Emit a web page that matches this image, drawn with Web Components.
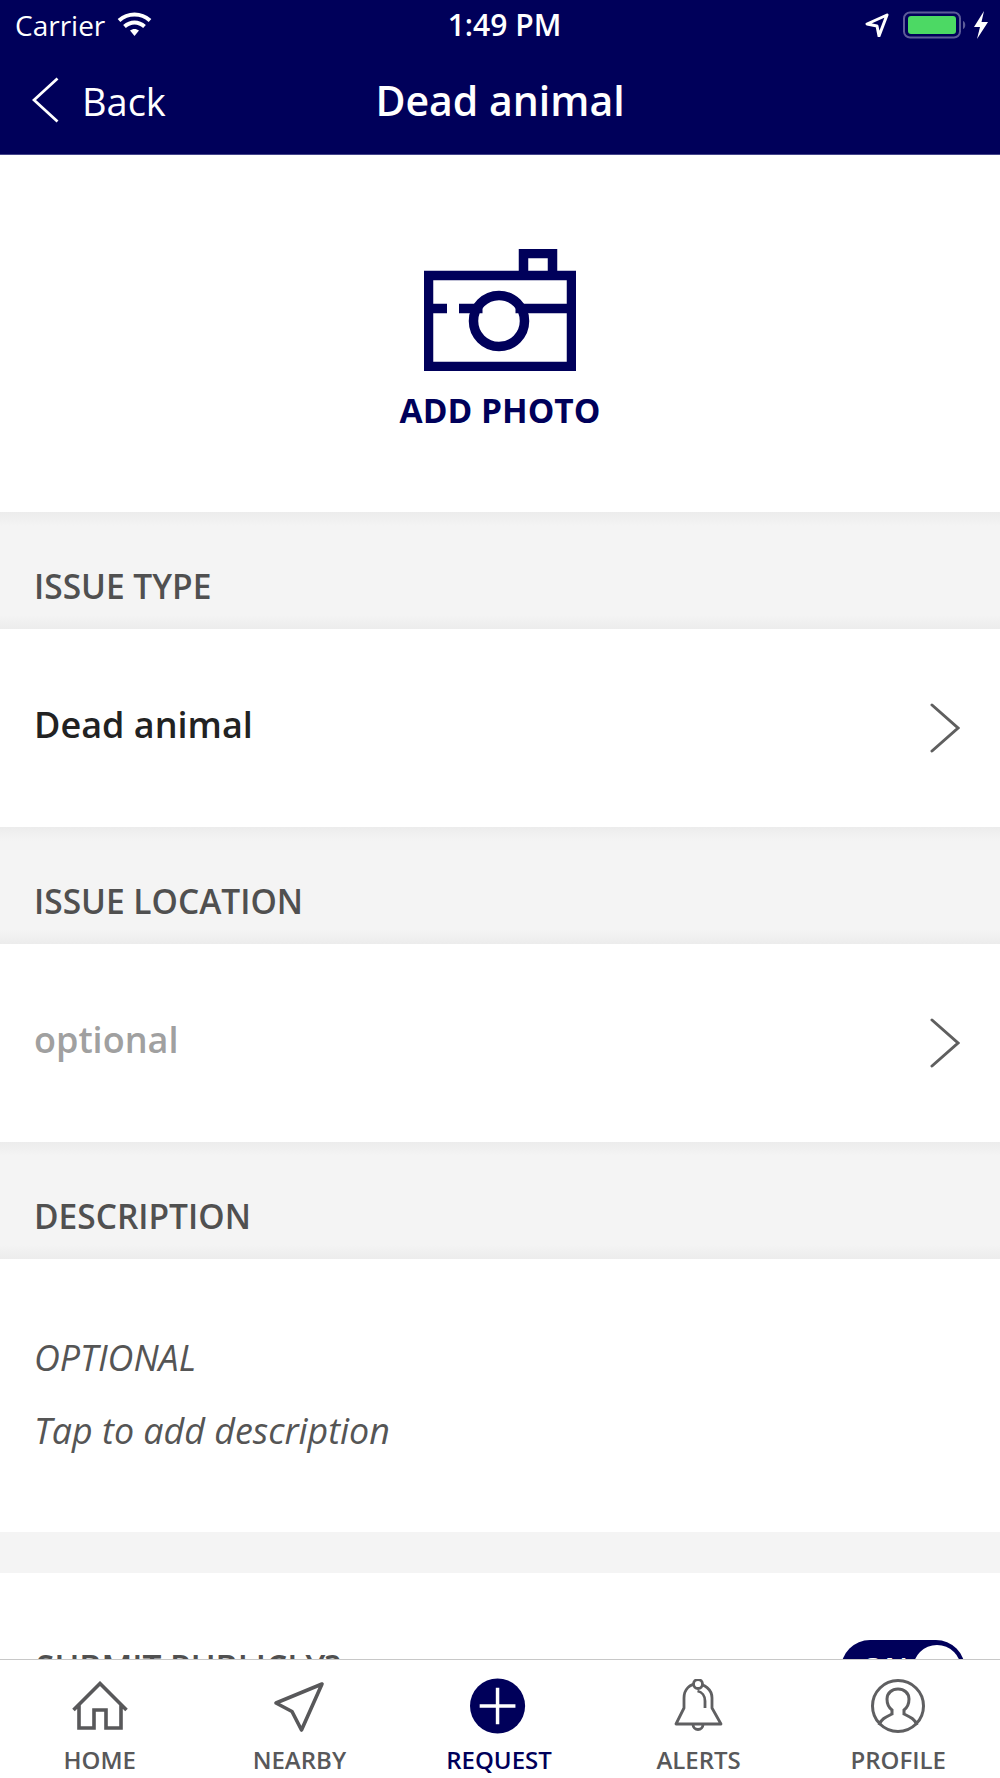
<!DOCTYPE html>
<html>
<head>
<meta charset="utf-8">
<style>
  html, body { margin: 0; padding: 0; background: #fff; }
  body { font-family: "Open Sans", sans-serif; }
</style>
</head>
<body>
<app-screen>
  <status-bar></status-bar>
  <nav-bar title="Dead animal"></nav-bar>
  <photo-picker></photo-picker>
  <section-header>ISSUE TYPE</section-header>
  <form-row>Dead animal</form-row>
  <section-header>ISSUE LOCATION</section-header>
  <form-row placeholder>optional</form-row>
  <section-header>DESCRIPTION</section-header>
  <description-box></description-box>
  <public-toggle></public-toggle>
  <tab-bar slot="tabs">
    <tab-item label="HOME"><svg viewBox="0 0 60 52"><path d="M3.500 29 30 2.500 56.500 29M9 24V47H24V29H36V47H51V24" fill="none" stroke="#58585a" stroke-width="3.600"/></svg></tab-item>
    <tab-item label="NEARBY"><svg viewBox="0 0 60 52"><path d="M53 3 7 22 23 30.500 32.500 49Z" fill="none" stroke="#58585a" stroke-width="3.600" stroke-linejoin="round"/></svg></tab-item>
    <tab-item label="REQUEST" active><svg viewBox="0 0 60 60" style="height:58px;margin-top:-4px"><circle cx="28.500" cy="30" r="28.500" fill="#00005a"/><path d="M28.500 11V49M10 30H47" stroke="#fff" stroke-width="3.600" fill="none"/></svg></tab-item>
    <tab-item label="ALERTS"><svg viewBox="0 0 60 54" style="height:54px;margin-top:-2px"><path d="M7 45 15 29V19C15 10 21 5 28 5S43 10 43 19V29L52 45Z" fill="none" stroke="#5f5f61" stroke-width="2.800" stroke-linejoin="round"/><circle cx="29" cy="5" r="4.500" fill="#fff" stroke="#5f5f61" stroke-width="2.800"/><path d="M24 45.500a5 5 0 0 0 10 0" fill="none" stroke="#5f5f61" stroke-width="2.800"/><path d="M28.500 12C33 13 36 17 36 22V29" fill="none" stroke="#5f5f61" stroke-width="2.800"/></svg></tab-item>
    <tab-item label="PROFILE"><svg viewBox="0 0 60 56" style="height:56px;margin-top:-3px"><circle cx="30" cy="28" r="25.500" fill="none" stroke="#5f5f61" stroke-width="3"/><path d="M11 47C13 41 18 39 24 36V32C20 29 19 25 19 21 19 15 24 11 30 11S41 15 41 21C41 25 40 29 36 32V36C42 39 47 41 49 47" fill="none" stroke="#5f5f61" stroke-width="3"/></svg></tab-item>
  </tab-bar>
</app-screen>

<script>
const el = (name, css, html) => {
  customElements.define(name, class extends HTMLElement {
    constructor() {
      super();
      this.attachShadow({ mode: "open" });
      this.shadowRoot.innerHTML = `<style>${css}</style>${html(this)}`;
    }
  });
};

el("app-screen", `
  :host { display: flex; flex-direction: column; width: 1000px; height: 1778px; overflow: hidden; background: #fff; }
  .scroll { flex: 1; min-height: 0; overflow: hidden; }
`, () => `<div class="scroll"><slot></slot></div><slot name="tabs"></slot>`);

el("status-bar", `
  :host { display: flex; align-items: center; height: 50px; box-sizing: border-box; padding: 0 11px 0 15px; background: #00005a; color: #fff; font-family: "Open Sans", sans-serif; position: relative; }
  .left, .right { display: flex; align-items: center; }
  .carrier { font-size: 28px; margin-right: 12px; }
  .time { position: absolute; left: 9px; right: 0; text-align: center; font-weight: 600; font-size: 30px; top: 8px; line-height: 34px; }
  .right { margin-left: auto; position: relative; }
  svg { display: block; }
`, () => `
  <div class="left">
    <span class="carrier">Carrier</span>
    <svg width="35" height="26" viewBox="0 0 35 26"><path d="M17.500 24 22 18.600C19.500 16.500 15.500 16.500 13 18.600Z" fill="#fff"/><path d="M2 8.500C11 0.500 24 0.500 33 8.500M7.500 14.500C13.500 9 21.500 9 27.500 14.500" fill="none" stroke="#fff" stroke-width="4"/></svg>
  </div>
  <span class="time">1:49 PM</span>
  <div class="right">
    <svg width="24" height="24" viewBox="0 0 24 24" style="margin-right:14px"><path d="M22 2 2 11 12 13 14 23Z" fill="none" stroke="#fff" stroke-width="3" stroke-linejoin="round"/></svg>
    <svg width="65" height="28" viewBox="0 0 65 28" style="margin-right:5px"><rect x="1" y="1.500" width="56" height="25" rx="6" fill="none" stroke="#5c5c98" stroke-width="2"/><rect x="5" y="5" width="48" height="18" rx="3" fill="#4cd964"/><path d="M60 10c3 1 3 7 0 8Z" fill="#5c5c98"/></svg>
    <svg width="16" height="28" viewBox="0 0 16 28"><path d="M11 0 1 16H7L4 28 15 11H8.500Z" fill="#fff"/></svg>
  </div>
`);

el("nav-bar", `
  :host { display: block; position: relative; height: 105px; background: #00005a; color: #fff; font-family: "Open Sans", sans-serif; border-bottom: 1px solid #44448a; box-sizing: border-box; }
  .bar { display: flex; align-items: center; height: 100%; padding-left: 32px; padding-bottom: 4px; box-sizing: border-box; }
  .back { display: flex; align-items: center; gap: 23px; font-size: 38px; }
  .back span { position: relative; top: 1px; }
  svg { display: block; }
  .title { position: absolute; left: 0; right: 0; top: 0; bottom: 4px; display: flex; align-items: center; justify-content: center; font-size: 41px; font-weight: 600; }
`, host => `
  <div class="bar">
    <div class="back">
      <svg width="27" height="46" viewBox="0 0 27 46"><path d="M25.500 1.500 2 23 25.500 44.500" fill="none" stroke="#fff" stroke-width="2.800"/></svg>
      <span>Back</span>
    </div>
    <span class="title">${host.getAttribute("title")}</span>
  </div>
`);

el("photo-picker", `
  :host { display: flex; flex-direction: column; align-items: center; height: 357px; box-sizing: border-box; padding-top: 94px; color: #00005a; font-family: "Open Sans", sans-serif; }
  svg { display: block; margin-bottom: 19px; }
  span { font-size: 33.500px; font-weight: 700; line-height: 40px; }
`, () => `
  <svg width="152" height="122" viewBox="0 0 152 122">
    <g fill="none" stroke="#00005a" stroke-width="9.500">
      <path d="M4.500 26.500H147.500V117.500H4.500Z"/>
      <path d="M99.500 26.500V4.500H128.500V26.500"/>
      <circle cx="75" cy="72" r="25.500"/>
      <path d="M0 59.500H23M35 59.500H58.500M91.500 59.500H152"/>
    </g>
  </svg>
  <span>ADD PHOTO</span>
`);

el("section-header", `
  :host { display: flex; align-items: flex-end; height: 117px; box-sizing: border-box; padding: 0 0 23px 34px; color: #505050; font-family: "Open Sans", sans-serif; font-size: 33.500px; font-weight: 600; line-height: 40px;
    background: linear-gradient(#ececec, #f4f4f4 14px, #f4f4f4 calc(100% - 14px), #ececec); }
`, () => `<slot></slot>`);

el("form-row", `
  :host { display: flex; align-items: center; justify-content: space-between; height: 198px; box-sizing: border-box; padding: 0 40px 0 34px; color: #222; font-family: "Open Sans", sans-serif; font-size: 36px; font-weight: 600; }
  :host([placeholder]) { color: #a0a0a0; }
  span { position: relative; top: -4px; }
  svg { display: block; }
`, () => `
  <span><slot></slot></span>
  <svg width="30" height="50" viewBox="0 0 30 50"><path d="M2 2 28 25 2 48" fill="none" stroke="#5f5f5f" stroke-width="3" stroke-linecap="round"/></svg>
`);

el("description-box", `
  :host { display: block; height: 273px; box-sizing: border-box; padding: 62px 0 0 34px; color: #555; font-family: "Open Sans", sans-serif; font-size: 35.800px; font-style: italic; line-height: 72.500px; }
`, () => `<div>OPTIONAL</div><div>Tap to add description</div>`);

el("public-toggle", `
  :host { display: flex; align-items: flex-start; justify-content: space-between; box-sizing: border-box; height: 200px; border-top: 41px solid #f4f4f4; padding: 67px 35px 0 36px; color: #505050; font-family: "Open Sans", sans-serif; font-size: 33.500px; font-weight: 600; line-height: 40px; }
  .label { margin-top: 7px; }
  .switch { display: flex; align-items: center; width: 124px; height: 58px; border-radius: 29px; background: #00005a; color: #fff; font-size: 30px; padding-left: 20px; box-sizing: border-box; position: relative; }
  .knob { position: absolute; right: 4px; top: 5px; width: 48px; height: 48px; border-radius: 50%; background: #fff; }
`, () => `
  <span class="label">SUBMIT PUBLICLY?</span>
  <div class="switch"><span>ON</span><span class="knob"></span></div>
`);

el("tab-bar", `
  :host { display: grid; grid-template-columns: repeat(5, 1fr); height: 119px; box-sizing: border-box; padding-right: 2px; border-top: 1px solid #c8c8c8; background: #fff; position: relative; }
`, () => `<slot></slot>`);

el("tab-item", `
  :host { display: flex; flex-direction: column; align-items: center; padding-top: 21px; box-sizing: border-box; color: #58585a; font-family: "Open Sans", sans-serif; font-size: 24px; font-weight: 600; }
  :host([active]) { color: #00005a; }
  .icon { height: 52px; display: flex; justify-content: center; }
  ::slotted(svg) { height: 52px; width: auto; display: block; }
  .label { line-height: 30px; margin-top: 12px; }
`, host => `<div class="icon"><slot></slot></div><span class="label">${host.getAttribute("label")}</span>`);
</script>
</body>
</html>
